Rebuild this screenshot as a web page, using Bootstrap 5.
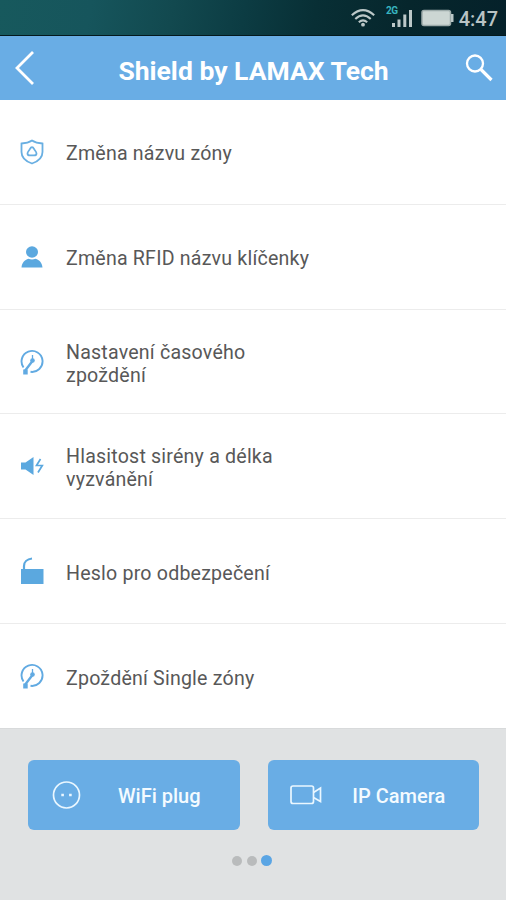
<!DOCTYPE html>
<html lang="cs">
<head>
<meta charset="utf-8">
<meta name="viewport" content="width=device-width, initial-scale=1">
<title>Shield by LAMAX Tech</title>
<link href="https://cdn.jsdelivr.net/npm/bootstrap@5.3.0/dist/css/bootstrap.min.css" rel="stylesheet">
<style>
  body { font-family: Roboto, "Liberation Sans", sans-serif; background: #e0e2e3; height: 900px; overflow: hidden; }
  svg { display: block; flex: none; }
  .status-bar { height: 36px; padding-right: 8px; background: linear-gradient(100deg, #17595d 0, #16555c 18%, #12494f 34%, #0c3c43 48%, #082f35 62%, #06262c 80%, #05212a 100%); border-bottom: 1px solid #04191d; }
  .clock { font-size: 20px; font-weight: 500; line-height: 36px; padding-top: 2px; color: #b9c3c4; margin-left: 4px; }
  .title-bar { height: 64px; background: #69ade5; padding: 0 13px 0 14px; }
  .app-title { font-size: 26.500px; font-weight: 700; line-height: 60px; padding: 5px 0 0 6px; color: #fff; letter-spacing: 0; }
  .menu-list { height: 628px; }
  .menu-list .list-group-item { flex: 1 1 0; padding: 3px 0 0 20px; border-color: #ececec; color: #585858; font-size: 19.6px; line-height: 23px; letter-spacing: .2px; }
  .menu-list .list-group-item:first-child { border-top: 0; }
  .menu-list svg { margin-right: 22px; margin-top: -3px; }
  .menu-label { max-width: 250px; padding-top: 1px; }
  .menu-label.narrow { max-width: 215px; }
  .panel { height: 172px; background: #e0e2e3; padding: 31px 27px 0 28px; border-top: 1px solid #d8dadb; }
  .tiles { gap: 28px; }
  .tile { height: 70px; background: #69ade5; border-radius: 6px; color: #f4fbff; font-size: 20px; font-weight: 500; border: 0; padding: 0 3px 0 22px; }
  .tile:hover { background: #5fa4dd; color: #fff; }
  .tile span { line-height: 24px; padding-top: 2px; }
  .dots { gap: 4.500px; margin-top: 25px; padding-right: 3px; }
  .dots span { width: 10px; height: 10px; border-radius: 50%; background: #b9bbbc; }
  .dots .on { width: 11px; height: 11px; background: #5aa5e4; }
</style>
</head>
<body>
<div class="status-bar d-flex align-items-center justify-content-end">
  <svg width="24" height="18" viewBox="0 0 24 18" fill="none" stroke="#bcc8c8" stroke-width="2.1"><path d="M.8 6.2Q12-4 23.200 6.200M4.300 9.900Q12 2.800 19.700 9.900M7.800 13.200Q12 9.500 16.200 13.200"/><circle cx="12" cy="15.700" r="1.900" fill="#bcc8c8" stroke="none"/></svg>
  <svg width="30" height="28" viewBox="0 0 30 28" class="ms-2"><text x="3" y="9.500" font-family="Roboto, sans-serif" font-size="10" font-weight="700" fill="#38b4bf" textLength="12">2G</text><path d="M9 19h3v4H9zM14.500 15.500h3V23h-3zM20.300 10.500h3V23h-3zM26 6h3v17h-3z" fill="#bcc8c8"/></svg>
  <svg width="34" height="18" viewBox="0 0 34 18" class="ms-2"><rect x="1" y="1.500" width="28.500" height="15" rx="2" fill="#ccd6d3" stroke="#9dabaa" stroke-width="1.500"/><path d="M30 5h2.500v8H30z" fill="#bcc8c8"/></svg>
  <span class="clock">4:47</span>
</div>
<header class="title-bar d-flex align-items-center justify-content-between">
  <svg width="22" height="34" viewBox="0 0 22 34" fill="none" stroke="#fff" stroke-width="2.800"><path d="M19 1 3 17l16 16"/></svg>
  <h1 class="app-title m-0">Shield by LAMAX Tech</h1>
  <svg width="28" height="28" viewBox="0 0 28 28" fill="none" stroke="#fff"><circle cx="10" cy="9.500" r="8" stroke-width="2.300"/><path d="m16 15.500 10.500 10.500" stroke-width="3.200"/></svg>
</header>
<main class="menu-list list-group list-group-flush">
  <div class="list-group-item d-flex align-items-center">
    <svg width="24" height="26" viewBox="0 0 24 26" fill="none" stroke="#69afe2" stroke-width="1.800"><path d="M12 1.500Q16 4.200 22.500 4.500v8.500c0 6-4.500 9.500-10.500 11.500C6 22.500 1.500 19 1.500 13V4.500Q8 4.200 12 1.500z"/><path d="M12 8.200c1.300 0 1.800 1.400 2.500 2.600 1 1.300 2 2.200 2 3.600 0 1.300-1.300 2-2.500 2h-4c-1.300 0-2.500-.7-2.500-2 0-1.400 1-2.300 2-3.600.7-1.200 1.200-2.600 2.500-2.600z"/></svg>
    <span class="menu-label">Změna názvu zóny</span>
  </div>
  <div class="list-group-item d-flex align-items-center">
    <svg width="24" height="24" viewBox="0 0 24 24" fill="#5ba8df"><ellipse cx="12" cy="7" rx="6" ry="5.700"/><path d="M1.500 22.500c.5-4.500 3-7.500 7-8.700 2.200.9 4.800.9 7 0 4 1.200 6.500 4.200 7 8.700z"/></svg>
    <span class="menu-label">Změna RFID názvu klíčenky</span>
  </div>
  <div class="list-group-item d-flex align-items-center">
    <svg width="24" height="26" viewBox="0 0 24 26" fill="none" stroke="#61aae2" stroke-width="1.900"><path d="M3.500 18.500A10.500 10.500 0 1 1 10.500 22.800"/><path d="M12.500 12 4.800 22" stroke-width="2.300"/><circle cx="12.500" cy="11.500" r="2.300" fill="#61aae2" stroke="none"/><path d="M12.500 6v4" stroke-width="1.300"/><path d="M3.200 20.500h4.500v5H3.200z" fill="#61aae2" stroke="none"/></svg>
    <span class="menu-label narrow">Nastavení časového zpoždění</span>
  </div>
  <div class="list-group-item d-flex align-items-center">
    <svg width="24" height="20" viewBox="0 0 24 20" fill="#5ba8df"><path d="M1 6.500h4.500L13.500 1v18l-8-5.500H1z"/><path d="m20.500 3-4 6.500h5.800L18 16.500" fill="none" stroke="#5ba8df" stroke-width="1.700"/></svg>
    <span class="menu-label narrow">Hlasitost sirény a délka vyzvánění</span>
  </div>
  <div class="list-group-item d-flex align-items-center">
    <svg width="24" height="28" viewBox="0 0 24 28" fill="#5ba8df"><path d="M1 12h22.500V27H1z"/><path d="M4 13V9c0-4 3-7 8-7.500" fill="none" stroke="#5ba8df" stroke-width="2.200"/></svg>
    <span class="menu-label">Heslo pro odbezpečení</span>
  </div>
  <div class="list-group-item d-flex align-items-center">
    <svg width="24" height="26" viewBox="0 0 24 26" fill="none" stroke="#61aae2" stroke-width="1.900"><path d="M3.500 18.500A10.500 10.500 0 1 1 10.500 22.800"/><path d="M12.500 12 4.800 22" stroke-width="2.300"/><circle cx="12.500" cy="11.500" r="2.300" fill="#61aae2" stroke="none"/><path d="M12.500 6v4" stroke-width="1.300"/><path d="M3.200 20.500h4.500v5H3.200z" fill="#61aae2" stroke="none"/></svg>
    <span class="menu-label">Zpoždění Single zóny</span>
  </div>
</main>
<footer class="panel">
  <div class="tiles row m-0 flex-nowrap">
    <button class="tile btn col d-flex align-items-center" type="button">
      <svg width="32" height="30" viewBox="0 0 32 30" fill="none" stroke="#eaf7ff" stroke-width="1.700"><circle cx="16.500" cy="15" r="13"/><path d="M11.300 15h2.600M19.100 15h2.600" stroke-width="2.600"/></svg>
      <span class="flex-fill text-center">WiFi plug</span>
    </button>
    <button class="tile btn col d-flex align-items-center" type="button">
      <svg width="32" height="22" viewBox="0 0 32 22" fill="none" stroke="#eaf7ff" stroke-width="1.700"><rect x="1" y="2" width="22.500" height="17.500" rx="2"/><path d="M23.500 8.500 30.500 4v13.500L23.500 13.500"/></svg>
      <span class="flex-fill text-center">IP Camera</span>
    </button>
  </div>
  <div class="dots d-flex justify-content-center align-items-center"><span></span><span></span><span class="on"></span></div>
</footer>
<script src="https://cdn.jsdelivr.net/npm/bootstrap@5.3.0/dist/js/bootstrap.bundle.min.js"></script>
</body>
</html>
